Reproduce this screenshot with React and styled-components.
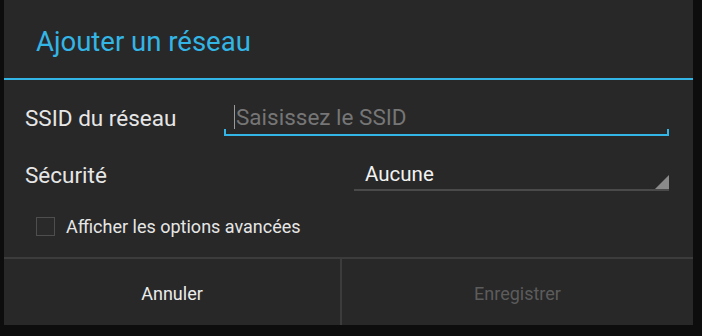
import styled, { createGlobalStyle } from "styled-components";

const Global = createGlobalStyle`
  html, body {
    margin: 0;
    padding: 0;
    background: #0d0d0d;
    font-family: Roboto, "Liberation Sans", sans-serif;
  }
`;

const Screen = styled.div`
  width: 702px;
  height: 336px;
  background: #0d0d0d;
  display: flex;
  align-items: flex-start;
`;

const Dialog = styled.div`
  margin-left: 4px;
  width: 689px;
  height: 325px;
  background: #282828;
  display: flex;
  flex-direction: column;
`;

const TitleBar = styled.div`
  height: 80px;
  display: flex;
  align-items: center;
  padding-left: 32px;
  padding-top: 4px;
  box-sizing: border-box;
  border-bottom: 2px solid #33b5e5;

  h1 {
    margin: 0;
    font-weight: 400;
    font-size: 27.5px;
    color: #33b5e5;
  }
`;

const Body = styled.div`
  flex: 1;
  padding: 0 24px 0 21px;
  display: flex;
  flex-direction: column;
`;

const Row = styled.div`
  display: grid;
  grid-template-columns: ${({ split }) => split} 1fr;
  align-items: center;
  height: ${({ h }) => h}px;
`;

const Label = styled.span`
  color: #e6e6e6;
  font-size: 22.5px;
`;

const Input = styled.div`
  position: relative;
  height: 34px;
  display: flex;
  align-items: center;
  padding-left: 10px;
  color: #767676;
  font-size: 22.5px;
  border-bottom: 2px solid #33b5e5;

  &::before, &::after {
    content: "";
    position: absolute;
    bottom: 0;
    width: 2px;
    height: 5px;
    background: #33b5e5;
  }
  &::before { left: 0; }
  &::after { right: 0; }
`;

const Caret = styled.i`
  width: 1px;
  height: 24px;
  background: #9a9a9a;
  margin-right: 1px;
`;

const Spinner = styled.div`
  position: relative;
  height: 30px;
  display: flex;
  align-items: center;
  padding-left: 11px;
  color: #f2f2f2;
  font-size: 20.5px;
  border-bottom: 2px solid #4a4a4a;

  &::after {
    content: "";
    position: absolute;
    right: 0;
    bottom: 0;
    width: 0;
    height: 0;
    border-left: 14px solid transparent;
    border-bottom: 14px solid #8a8a8a;
  }
`;

const CheckRow = styled.label`
  display: flex;
  align-items: center;
  gap: 11px;
  padding-left: 11px;
  padding-top: 1px;
  flex: 1;
  color: #e6e6e6;
  font-size: 18px;
`;

const Box = styled.span`
  width: 17px;
  height: 17px;
  border: 1px solid #4e4e4e;
  background: #2a2a2a;
`;

const Buttons = styled.div`
  height: 66px;
  border-top: 2px solid #3c3c3c;
  display: grid;
  grid-template-columns: 336px 1fr;
`;

const Button = styled.div`
  display: flex;
  align-items: center;
  justify-content: center;
  padding-top: 2px;
  font-size: 18px;
  color: ${({ disabled }) => (disabled ? "#5c5c5c" : "#ececec")};
  & + & {
    border-left: 2px solid #3c3c3c;
  }
`;

export default function App() {
  return (
    <>
      <Global />
      <Screen>
        <Dialog>
          <TitleBar>
            <h1>Ajouter un réseau</h1>
          </TitleBar>
          <Body>
            <Row split="199px" h={76}>
              <Label>SSID du réseau</Label>
              <Input>
                <Caret />
                Saisissez le SSID
              </Input>
            </Row>
            <Row split="329px" h={38}>
              <Label>Sécurité</Label>
              <Spinner>Aucune</Spinner>
            </Row>
            <CheckRow>
              <Box />
              Afficher les options avancées
            </CheckRow>
          </Body>
          <Buttons>
            <Button>Annuler</Button>
            <Button disabled>Enregistrer</Button>
          </Buttons>
        </Dialog>
      </Screen>
    </>
  );
}
